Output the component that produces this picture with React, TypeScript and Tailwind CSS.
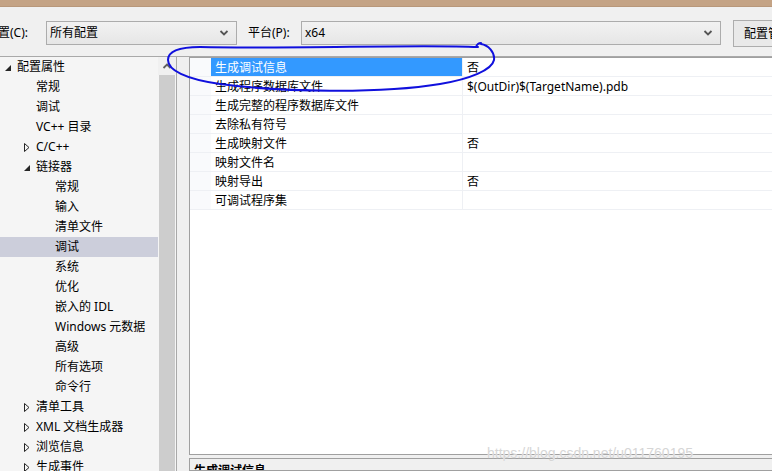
import React from 'react';

const font = { fontFamily: '"Noto Sans", "Noto Sans CJK SC", sans-serif' };

type Node = { label: string; level: number; arrow?: 'open' | 'closed'; selected?: boolean };

const tree: Node[] = [
  { label: '配置属性', level: 0, arrow: 'open' },
  { label: '常规', level: 1 },
  { label: '调试', level: 1 },
  { label: 'VC++ 目录', level: 1 },
  { label: 'C/C++', level: 1, arrow: 'closed' },
  { label: '链接器', level: 1, arrow: 'open' },
  { label: '常规', level: 2 },
  { label: '输入', level: 2 },
  { label: '清单文件', level: 2 },
  { label: '调试', level: 2, selected: true },
  { label: '系统', level: 2 },
  { label: '优化', level: 2 },
  { label: '嵌入的 IDL', level: 2 },
  { label: 'Windows 元数据', level: 2 },
  { label: '高级', level: 2 },
  { label: '所有选项', level: 2 },
  { label: '命令行', level: 2 },
  { label: '清单工具', level: 1, arrow: 'closed' },
  { label: 'XML 文档生成器', level: 1, arrow: 'closed' },
  { label: '浏览信息', level: 1, arrow: 'closed' },
  { label: '生成事件', level: 1, arrow: 'closed' },
];

const props: [string, string][] = [
  ['生成调试信息', '否'],
  ['生成程序数据库文件', '$(OutDir)$(TargetName).pdb'],
  ['生成完整的程序数据库文件', ''],
  ['去除私有符号', ''],
  ['生成映射文件', '否'],
  ['映射文件名', ''],
  ['映射导出', '否'],
  ['可调试程序集', ''],
];

const indent = ['pl-[4px]', 'pl-[23px]', 'pl-[42px]'];

function Arrow({ kind }: { kind?: 'open' | 'closed' }) {
  if (kind === 'open')
    return (
      <svg width="13" height="20" viewBox="0 0 13 20" className="shrink-0">
        <polygon points="7,8 7,14 1,14" fill="#262626" />
      </svg>
    );
  if (kind === 'closed')
    return (
      <svg width="13" height="20" viewBox="0 0 13 20" className="shrink-0">
        <polygon points="1.5,6.5 6,10.5 1.5,14.5" fill="none" stroke="#262626" strokeWidth="1" />
      </svg>
    );
  return <span className="w-[13px] shrink-0" />;
}

function Chevron() {
  return (
    <svg width="10" height="8" viewBox="0 0 10 8">
      <path d="M1.5 2 L5 5.5 L8.5 2" fill="none" stroke="#555" strokeWidth="1.8" />
    </svg>
  );
}

function Combo({ value, className }: { value: string; className: string }) {
  return (
    <div className={`shrink-0 h-[24px] flex items-center justify-between border border-[#acacac] bg-gradient-to-b from-[#f2f2f2] to-[#e6e6e6] pl-[3px] pr-[7px] ${className}`}>
      <span className="text-[12px] text-black">{value}</span>
      <Chevron />
    </div>
  );
}

export default function App() {
  return (
    <div className="relative w-[772px] h-[471px] overflow-hidden bg-[#f0f0f0] text-[12px] text-black" style={font}>
      <div className="h-[7px] bg-[#c4a385] border-b border-[#b8977a]" />

      <div className="h-[50px] flex items-start pt-[14px] border-b border-[#a9a9a9]">
        <span className="shrink-0 ml-[-14px] w-[50px] leading-[24px] whitespace-nowrap">配置(C):</span>
        <Combo value="所有配置" className="ml-[10px] w-[191px]" />
        <span className="shrink-0 ml-[11px] w-[43px] leading-[24px] whitespace-nowrap">平台(P):</span>
        <Combo value="x64" className="ml-[10px] w-[420px]" />
        <div className="shrink-0 ml-[12px] -mt-[1px] h-[27px] w-[60px] border border-[#adadad] bg-[#e9e9e9] pl-[10px] leading-[25px] whitespace-nowrap overflow-hidden">
          配置管理器...
        </div>
      </div>

      <div className="flex h-[414px]">
        <div className="w-[177px] shrink-0 flex bg-[#f5f5f5] border-r border-[#a9a9a9]">
          <div className="w-[158px]">
            {tree.map((n, i) => (
              <div
                key={i}
                className={`h-[20px] flex items-center ${indent[n.level]} ${n.selected ? 'bg-[#cccedb]' : ''}`}
              >
                <Arrow kind={n.arrow} />
                <span className="whitespace-nowrap">{n.label}</span>
              </div>
            ))}
          </div>
          <div className="w-[18px] flex flex-col">
            <div className="h-[18px] flex items-center justify-center bg-[#f0f0f0]">
              <svg width="10" height="8" viewBox="0 0 10 8">
                <path d="M1.5 6 L5 2.5 L8.5 6" fill="none" stroke="#606060" strokeWidth="1.8" />
              </svg>
            </div>
            <div className="flex-1 mx-[1px] bg-[#cdcdcd]" />
          </div>
        </div>

        <div className="flex-1 flex flex-col pl-[12px] gap-[3px]">
          <div className="shrink-0 h-[398px] bg-white border border-[#a0a0a0] border-r-0">
            {props.map(([k, v], i) => (
              <div key={i} className="h-[19px] flex border-b border-[#eef0f4]">
                <div className="w-[21px] bg-[#f9fafc]" />
                <div
                  className={`w-[252px] pl-[4px] leading-[19px] border-r border-[#eef0f4] whitespace-nowrap ${
                    i === 0 ? 'bg-[#3399ff] text-white' : ''
                  }`}
                >
                  {k}
                </div>
                <div className="flex-1 pl-[4px] leading-[19px] whitespace-nowrap">{v}</div>
              </div>
            ))}
          </div>
          <div className="flex-1 min-h-0 overflow-hidden border border-[#a0a0a0] border-r-0 pl-[4px] pt-[3px] font-bold whitespace-nowrap">
            生成调试信息
          </div>
        </div>
      </div>

      <span
        className="absolute left-[487px] top-[443px] text-[14px] text-[#d6d6d6] whitespace-nowrap"
        style={{ fontFamily: '"Liberation Sans", sans-serif', textShadow: '0 0 1px #fff' }}
      >
        https://blog.csdn.net/u011760195
      </span>

      <svg className="absolute left-0 top-0 pointer-events-none" width="772" height="471" viewBox="0 0 772 471">
        <path
          d="M478 47 C 420 44, 300 49, 200 47 C 178 47, 168 52, 168 60 C 168 70, 185 79, 220 84 C 280 92, 380 94, 440 84 C 470 79, 492 70, 494 60 C 495 52, 488 45, 481 44"
          fill="none"
          stroke="#1010dd"
          strokeWidth="2"
          strokeLinecap="round"
        />
        <path d="M476 47 C 477 44, 479 43, 481 43" fill="none" stroke="#1010dd" strokeWidth="2" strokeLinecap="round" />
      </svg>
    </div>
  );
}
